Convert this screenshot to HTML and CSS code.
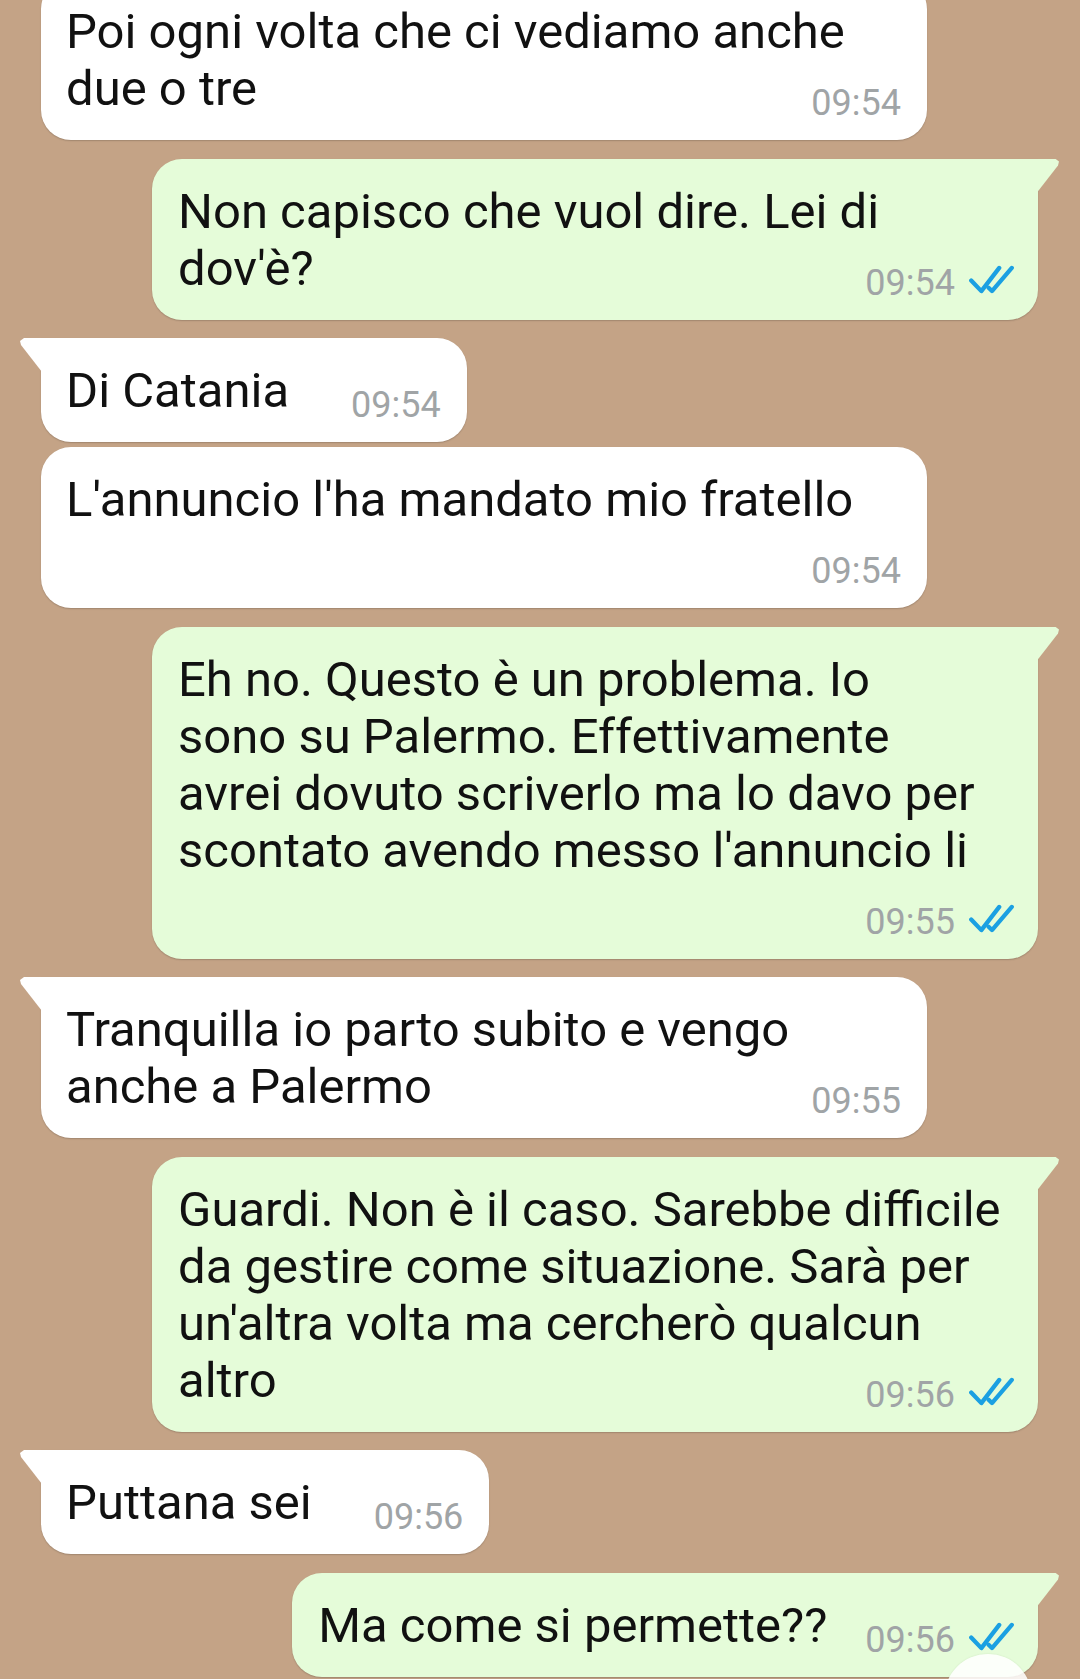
FILE: index.html
```html
<!DOCTYPE html>
<html lang="it">
<head>
  <meta charset="UTF-8" />
  <meta name="viewport" content="width=device-width, initial-scale=1.0" />
  <title>Chat</title>
  <link rel="stylesheet" href="styles.css">
</head>
<body>
  <div class="chat">
    <div class="msg in wide">Poi ogni volta che ci vediamo anche<br>due o tre<span class="meta">09:54</span></div>

    <div class="msg out wide tail">Non capisco che vuol dire. Lei di<br>dov'è?<span class="meta">09:54<svg class="ticks" viewBox="0 0 48 30"><polyline points="3,16 13.5,27 32,3" /><polyline points="21,23.5 24.5,27 45,3" /></svg></span></div>

    <div class="msg in tail">Di Catania<span class="meta">09:54</span></div>
    <div class="msg in wide next">L'annuncio l'ha mandato mio fratello<span class="meta">09:54</span></div>

    <div class="msg out wide tail">Eh no. Questo è un problema. Io<br>sono su Palermo. Effettivamente<br>avrei dovuto scriverlo ma lo davo per<br>scontato avendo messo l'annuncio li<span class="meta">09:55<svg class="ticks" viewBox="0 0 48 30"><polyline points="3,16 13.5,27 32,3" /><polyline points="21,23.5 24.5,27 45,3" /></svg></span></div>

    <div class="msg in wide tail">Tranquilla io parto subito e vengo<br>anche a Palermo<span class="meta">09:55</span></div>

    <div class="msg out wide tail">Guardi. Non è il caso. Sarebbe difficile<br>da gestire come situazione. Sarà per<br>un'altra volta ma cercherò qualcun<br>altro<span class="meta">09:56<svg class="ticks" viewBox="0 0 48 30"><polyline points="3,16 13.5,27 32,3" /><polyline points="21,23.5 24.5,27 45,3" /></svg></span></div>

    <div class="msg in tail">Puttana sei<span class="meta">09:56</span></div>

    <div class="msg out tail">Ma come si permette??<span class="meta">09:56<svg class="ticks" viewBox="0 0 48 30"><polyline points="3,16 13.5,27 32,3" /><polyline points="21,23.5 24.5,27 45,3" /></svg></span></div>
  </div>

  <div class="scroll-btn"></div>
</body>
</html>
```
FILE: styles.css
```css
html, body {
  height: 1679px;
  overflow: hidden;
}
body {
  margin: 0;
  background: #c4a386;
  font-family: Roboto, "Noto Sans", sans-serif;
  color: #111;
}
.chat {
  display: flex;
  flex-direction: column;
  padding: 0 42px 0 41px;
  margin-top: -21px;
}
.msg {
  position: relative;
  display: flow-root;
  box-sizing: border-box;
  max-width: 886px;
  margin-top: 18.5px;
  padding: 24px 26px 19px 25px;
  border-radius: 30px;
  font-size: 49px;
  line-height: 57px;
  box-shadow: 0 1px 1.5px rgba(0, 0, 0, 0.18);
}
.msg:first-child {
  margin-top: 0;
}
.msg.next {
  margin-top: 5px;
}
.wide {
  width: 886px;
}
.in {
  align-self: flex-start;
  background: #fff;
}
.out {
  align-self: flex-end;
  background: #e5fcd9;
  padding: 24px 23px 19px 26px;
}

/* little corner tails on the first bubble of a group */
.tail::before {
  content: "";
  position: absolute;
  top: 0;
  width: 22px;
  height: 34px;
}
.in.tail {
  border-top-left-radius: 0;
}
.in.tail::before {
  left: -21px;
  background: #fff;
  clip-path: polygon(4px 0, 100% 0, 100% 100%, 1px 7px, 0 3px);
}
.out.tail {
  border-top-right-radius: 0;
}
.out.tail::before {
  right: -21px;
  background: #e5fcd9;
  clip-path: polygon(0 0, calc(100% - 4px) 0, 100% 3px, calc(100% - 1px) 7px, 0 100%);
}

.meta {
  float: right;
  margin: 25px 0 0 62px;
  font-size: 36px;
  line-height: 36px;
  color: #a0a4a6;
}
.out .meta {
  margin-left: 38px;
}
.ticks {
  width: 47px;
  height: 29px;
  margin-left: 13px;
  vertical-align: 1px;
  fill: none;
  stroke: #1ba0e2;
  stroke-width: 4.4;
  stroke-linecap: round;
  stroke-linejoin: round;
}

.scroll-btn {
  position: fixed;
  left: 944px;
  top: 1654px;
  width: 88px;
  height: 88px;
  border-radius: 50%;
  background: rgba(255, 255, 255, 0.86);
  box-shadow: 0 0 2px rgba(0, 0, 0, 0.1);
}
```
